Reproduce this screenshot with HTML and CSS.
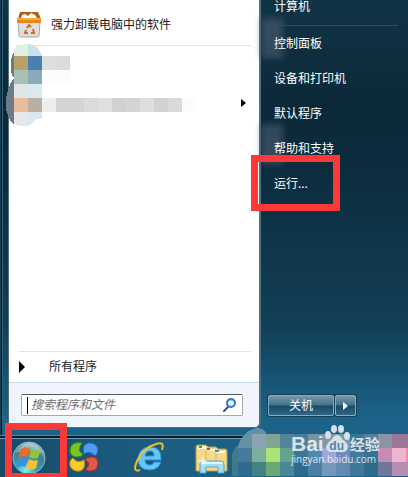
FILE: index.html
```html
<!DOCTYPE html>
<html lang="zh-CN">

<head>
    <meta charset="UTF-8">
    <meta name="viewport" content="width=device-width, initial-scale=1.0">
    <title>开始菜单</title>
    <link rel="stylesheet" href="styles.css">
</head>

<body>
    <div class="start-menu">
        <div class="programs">
            <a href="#" class="program">
                <svg class="program-icon" viewBox="0 0 26 27">
                    <path d="M2 8 L4 1 H22 L25 8Z" fill="#a8631a" />
                    <path d="M5 7 L6 4 L9 3 L12 5 L15 2 L19 4 L21 7Z" fill="#fffdf5" />
                    <path d="M2 11 H24 L23 25 Q23 26 21 26 H5 Q3 26 3 25Z" fill="#dedede" stroke="#a8a8a8" />
                    <path d="M1 7 H25 V11 Q25 12 24 12 H2 Q1 12 1 11Z" fill="#e58a14" />
                    <path d="M1 7 H25 V9 H1Z" fill="#f5ad3c" />
                    <path d="M11 17 L13 14 L15 16 M17 18 L18 22 H15 M12 22 H9 L10 19" fill="none" stroke="#d2691e" stroke-width="2" />
                </svg>
                <span>强力卸载电脑中的软件</span>
            </a>
            <div class="recent">
                <span class="arrow"></span>
            </div>
            <a href="#" class="all-programs">
                <span class="arrow"></span>
                <span>所有程序</span>
            </a>
            <form class="search">
                <div class="search-box">
                    <input type="text" placeholder="搜索程序和文件" aria-label="搜索程序和文件">
                    <svg class="search-icon" viewBox="0 0 14 14">
                        <path d="M1 13 L6 8" stroke="#2c4f9c" stroke-width="2" stroke-linecap="round" />
                        <circle cx="8" cy="5" r="4" fill="#e8f6ff" stroke="#2f74c8" stroke-width="2" />
                        <path d="M5 4 Q8 0 11 4" fill="none" stroke="#55b0e8" />
                    </svg>
                </div>
            </form>

            <!-- hidden recent items -->
            <svg class="mosaic" viewBox="0 0 190 84" shape-rendering="crispEdges">
                <path d="M8 8 Q5 12 5 18 V28 Q6 32 8 34 Q0 44 0 60 Q0 74 8 81Z" fill="#6b7c86" />
                <path d="M8 5 Q13 0 22 0 V12 H8Z" fill="#dff0e4" />
                <path d="M22 0 Q31 0 36 11 V12 H22Z" fill="#cae0ea" />
                <path d="M8 12h14v14H8z" fill="#b9a06a" />
                <path d="M22 12h14v14H22z" fill="#4a80b0" />
                <path d="M36 12h14v14H36z" fill="#dae1dd" />
                <path d="M50 12h14v14H50z" fill="#dadcdc" />
                <path d="M8 26h14v14H8z" fill="#a9c0b5" />
                <path d="M22 26h14v14H22z" fill="#8aa9b9" />
                <path d="M36 26h28v14H36z" fill="#fcfcfc" />
                <path d="M8 40h14v14H8z" fill="#e2e5e7" />
                <path d="M22 40h14v14H22z" fill="#dce8f0" />
                <path d="M8 54h14v14H8z" fill="#e8bc9c" />
                <path d="M22 54h14v14H22z" fill="#b8aea4" />
                <path d="M36 54h14v14H36z" fill="#f0eeec" />
                <path d="M50 54h28v14H50z" fill="#d3d4d6" />
                <path d="M78 54h14v14H78z" fill="#dcdbdc" />
                <path d="M92 54h14v14H92z" fill="#e2e0de" />
                <path d="M106 54h14v14h-14z" fill="#d1d1d2" />
                <path d="M120 54h14v14h-14z" fill="#d5d4d5" />
                <path d="M134 54h14v14h-14z" fill="#dedede" />
                <path d="M148 54h14v14h-14z" fill="#d4d1d2" />
                <path d="M162 54h14v14h-14z" fill="#d8d9d9" />
                <path d="M176 54h14v14h-14z" fill="#fbfdfd" />
                <path d="M8 68h14v14H14L8 80z" fill="#e6e7ea" />
                <path d="M22 68h14v7H30L26 80 22 82z" fill="#d8e8ee" />
            </svg>
        </div>

        <div class="places">
            <div class="glow glow-top"></div>
            <div class="glow glow-mid"></div>
            <nav>
                <a href="#">计算机</a>
                <hr>
                <a href="#">控制面板</a>
                <a href="#">设备和打印机</a>
                <a href="#">默认程序</a>
                <a href="#">帮助和支持</a>
                <a href="#" class="run">运行...</a>
            </nav>
            <div class="power">
                <button type="button" class="shutdown">关机</button>
                <button type="button" class="more" aria-label="更多选项"><span class="arrow"></span></button>
            </div>
        </div>
    </div>

    <div class="taskbar">
        <button type="button" class="start" aria-label="开始">
            <svg viewBox="0 0 36 36">
                <defs>
                    <radialGradient id="orb" cx="40%" cy="88%" r="85%">
                        <stop offset="0" stop-color="#7ff5f2" />
                        <stop offset=".4" stop-color="#2fa0b2" />
                        <stop offset=".75" stop-color="#407d8c" />
                        <stop offset="1" stop-color="#9ac0c4" />
                    </radialGradient>
                </defs>
                <circle cx="18" cy="18" r="16" fill="url(#orb)" stroke="#8eb9c4" />
                <path d="M4 13 Q18 -6 32 13 Q18 8 4 13Z" fill="#fff" opacity=".3" />
                <path d="M10 9 Q14 6 19 9 L17 17 Q12 15 7 18Z" fill="#ed6a2c" />
                <path d="M20 9 Q25 12 30 9 L27 18 Q23 20 18 17Z" fill="#8cc63e" />
                <path d="M7 20 Q12 16 17 19 L14 27 Q10 25 5 28Z" fill="#3f8fe0" />
                <path d="M18 19 Q22 22 27 20 L25 28 Q20 31 15 28Z" fill="#fcc22e" />
            </svg>
        </button>
        <button type="button" class="task" aria-label="浏览器">
            <svg viewBox="0 0 30 30">
                <path d="M13 1 Q2 -1 1 8 Q1 15 8 15 Q13 15 14 12 Q7 9 13 1Z" fill="#79c622" stroke="#3d8d1c" />
                <path d="M15 12 Q12 3 19 1 Q27 0 29 7 Q29 12 26 14 Q21 8 15 12Z" fill="#4d9df0" stroke="#2266bd" />
                <path d="M4 16 Q0 18 1 24 Q4 30 11 29 Q17 27 15 18 Q8 22 4 16Z" fill="#fcc928" stroke="#c98b10" />
                <path d="M22 15 Q29 14 29 22 Q28 30 20 29 Q17 29 17 27 Q23 21 16 18 Q18 15 22 15Z" fill="#e45648" stroke="#aa2c28" />
            </svg>
        </button>
        <button type="button" class="task" aria-label="Internet Explorer">
            <svg viewBox="0 0 30 30">
                <path d="M27 20 Q24 28 16 28 Q4 28 4 17 Q5 5 16 5 Q28 5 27 18 H11 Q11 23 16 23 Q19 23 20 20Z M11 14 H20 Q20 9 16 9 Q12 9 11 14Z" fill="#63c8f7" stroke="#2690d5" fill-rule="evenodd" />
                <path d="M6 28 Q-2 31 3 19 Q9 6 22 2 Q31 -1 28 8" fill="none" stroke="#f5bd22" stroke-width="2" />
            </svg>
        </button>
        <button type="button" class="task folder" aria-label="资源管理器">
            <svg viewBox="0 0 34 30">
                <path d="M2 3 Q2 1 4 1 H12 L14 3 H22 L24 5 H31 Q33 5 33 7 V27 H2Z" fill="#f3d988" stroke="#bd9a47" />
                <path d="M4 2 H12 V5 H21 V7 H31 V9 H22 V7 H13 V5 H4Z" fill="#fff8dc" />
                <path d="M5 2h3v2H5z" fill="#36a834" />
                <path d="M13 4h3v2h-3z" fill="#d9402c" />
                <path d="M21 6h4v2h-4z" fill="#2f8bdf" />
                <path d="M12 6V17M22 9V17" stroke="#d9b863" />
                <path d="M6 29 V20 Q6 17 9 17 H27 Q30 17 30 20 V29 H24 V23 H12 V29Z" fill="#a5dcf1" stroke="#5ba6cc" />
                <path d="M7 18 H29 V20 H7Z" fill="#dcf5fd" />
                <path d="M9 12 L10 16 L14 17 L10 19 L9 23 L8 19 L4 17 L8 16Z" fill="#fff" opacity=".7" />
            </svg>
        </button>

        <!-- hidden tray -->
        <svg class="tray-mosaic" viewBox="0 0 176 49" shape-rendering="crispEdges">
            <path d="M6 19 Q10 3 25 0 Q34 1 34 6 V20 H6Z" fill="#6590a5" />
            <path d="M20 6h14v14H20z" fill="#8ba4b2" />
            <path d="M34 6h14v14H34z" fill="#84a493" />
            <path d="M48 6h14v14H48z" fill="#54849a" />
            <path d="M62 6h14v14H62z" fill="#4b7f99" />
            <path d="M76 6h14v14H76z" fill="#79949f" />
            <path d="M90 6h28v14H90z" fill="#8098a8" />
            <path d="M118 6h14v14h-14z" fill="#3a7694" />
            <path d="M132 6h14v14h-14z" fill="#587f9a" />
            <path d="M146 6h14v14h-14z" fill="#8b93a8" />
            <path d="M160 6h16v14h-16z" fill="#9b7696" />
            <path d="M0 48V26L4 18H6V48z" fill="#43788b" />
            <path d="M6 20h14v14H6z" fill="#467b9b" />
            <path d="M20 20h14v14H20z" fill="#7caf9b" />
            <path d="M34 20h14v14H34z" fill="#abe476" />
            <path d="M48 20h14v14H48z" fill="#66a28c" />
            <path d="M62 20h14v14H62z" fill="#3a7799" />
            <path d="M76 20h14v14H76z" fill="#5288ab" />
            <path d="M90 20h14v14H90z" fill="#9ba9da" />
            <path d="M104 20h14v14h-14z" fill="#7189be" />
            <path d="M118 20h14v14h-14z" fill="#427b9d" />
            <path d="M132 20h14v14h-14z" fill="#347391" />
            <path d="M146 20h14v14h-14z" fill="#c58bb1" />
            <path d="M160 20h14v14h-14z" fill="#efb4d1" />
            <path d="M174 20h2v14h-2z" fill="#f784a5" />
            <path d="M6 34h14v14H6z" fill="#2d6b90" />
            <path d="M20 34h14v14H20z" fill="#438386" />
            <path d="M34 34h14v14H34z" fill="#6ba876" />
            <path d="M48 34h14v14H48z" fill="#48889a" />
            <path d="M62 34h14v14H62z" fill="#2d6c91" />
            <path d="M76 34h14v14H76z" fill="#4a80a5" />
            <path d="M90 34h14v14H90z" fill="#7697bd" />
            <path d="M104 34h14v14h-14z" fill="#628bb1" />
            <path d="M118 34h14v14h-14z" fill="#3f7898" />
            <path d="M132 34h14v14h-14z" fill="#2e6b8c" />
            <path d="M146 34h14v14h-14z" fill="#70779b" />
            <path d="M160 34h16v14h-16z" fill="#b98db2" />
        </svg>

        <div class="watermark">
            <div class="brand">
                <span class="bai">Bai</span>
                <span class="paw">
                    <svg viewBox="0 0 26 29">
                        <ellipse cx="4" cy="11" rx="3" ry="4" />
                        <ellipse cx="10" cy="5" rx="3" ry="4" />
                        <ellipse cx="17" cy="5" rx="3" ry="4" />
                        <ellipse cx="23" cy="12" rx="3" ry="4" />
                        <path d="M13 11 Q16 11 18 15 Q24 19 24 23 Q23 29 17 28 H8 Q2 28 2 23 Q3 19 8 15 Q10 11 13 11Z" />
                    </svg>
                    <span class="du">du</span>
                </span>
                <span class="exp">经验</span>
            </div>
            <div class="site">jingyan.baidu.com</div>
        </div>
    </div>
</body>

</html>
```

FILE: styles.css
```css
*,
*::after {
    box-sizing: border-box;
}

body {
    margin: 0;
    height: 100vh;
    overflow: hidden;
    display: flex;
    flex-direction: column;
    font-family: "Noto Sans", "Noto Sans CJK SC", sans-serif;
    font-size: 12px;
    line-height: 20px;
    background-color: #1d6286;
}

a {
    color: inherit;
    text-decoration: none;
}

button {
    margin: 0;
    padding: 0;
    border: none;
    background: none;
    font: inherit;
    color: inherit;
}

svg {
    display: block;
}

.start-menu {
    flex: 1;
    min-height: 0;
    display: flex;
    padding: 0 0 8px 8px;
    background: linear-gradient(#113444, #0b2838 25%, #0d2e40 42%, #123f57 75%, #1b6389 96%);
    box-shadow: inset 1px 0 #12415a, inset 2px 0 #071b27, inset 3px 0 #3c6073;
}

/* left side */
.programs {
    position: relative;
    width: 253px;
    display: flex;
    flex-direction: column;
    background-color: #fff;
    color: #1c1c1c;
    border: 1px solid #4f7080;
    border-top: none;
    border-right-width: 2px;
    border-radius: 0 0 6px 6px;
}

.program {
    display: flex;
    align-items: center;
    gap: 9px;
    height: 46px;
    margin: 0 8px 0 7px;
    padding-top: 4px;
    border-bottom: 1px solid #d6e5f2;
}

.program-icon {
    width: 26px;
    height: 27px;
}

.recent {
    flex: 1;
    padding: 53px 13px 0 0;
}

.arrow {
    display: block;
    width: 0;
    height: 0;
    border-left: 5px solid #000;
    border-top: 5px solid transparent;
    border-bottom: 5px solid transparent;
}

.recent .arrow {
    margin-left: auto;
    border-width: 4px 0 4px 5px;
}

.all-programs {
    display: flex;
    align-items: center;
    gap: 24px;
    height: 31px;
    margin: 0 8px 0 10px;
    border-top: 1px solid #d6e5f2;
}

.all-programs .arrow {
    border-width: 6px 0 6px 6px;
}

.search {
    margin: 0;
    padding: 11px 16px 11px 12px;
    background-color: #f0f4fc;
    border-top: 1px solid #c6dce8;
    border-radius: 0 0 5px 5px;
}

.search-box {
    display: flex;
    align-items: center;
    height: 22px;
    padding: 0 5px;
    background-color: #fff;
    border: 1px solid #a5a9ad;
    border-top-color: #54585c;
    border-radius: 2px;
}

.search-box input {
    flex: 1;
    min-width: 0;
    height: 17px;
    padding: 0 0 0 3px;
    border: none;
    border-left: 1px solid #000;
    outline: none;
    background: none;
    font: inherit;
    font-style: italic;
}

.search-box input::placeholder {
    color: #6d6d6d;
}

.search-icon {
    width: 14px;
    height: 14px;
}

.mosaic {
    position: absolute;
    top: 44px;
    left: -3px;
    width: 190px;
    height: 84px;
}

/* right side */
.places {
    position: relative;
    flex: 1;
    display: flex;
    flex-direction: column;
    justify-content: space-between;
    color: #fff;
}

.places nav {
    position: relative;
    display: flex;
    flex-direction: column;
    margin-left: 13px;
    margin-right: 10px;
}

.places nav a {
    height: 35px;
    line-height: 35px;
}

.places nav a:first-child {
    height: 25px;
    line-height: 14px;
}

.places hr {
    width: 100%;
    height: 1px;
    margin: 0;
    border: none;
    background-color: #344c5a;
}

.run {
    position: relative;
}

.run::after {
    content: "";
    position: absolute;
    top: -11px;
    left: -23px;
    width: 89px;
    height: 56px;
    border: 7px solid #fd3838;
}

.glow {
    position: absolute;
    left: 0;
    width: 22px;
    height: 40px;
    background-color: #46566a;
    opacity: .7;
    filter: blur(3px);
}

.glow-top {
    top: 18px;
}

.glow-mid {
    top: 124px;
}

.power {
    display: flex;
    margin: 0 0 12px 7px;
}

.power button {
    display: flex;
    align-items: center;
    justify-content: center;
    height: 21px;
    border: 1px solid #8cabba;
    border-radius: 2px;
    background: linear-gradient(#7797a7, #40728b 48%, #1a4b66 52%, #2d6787);
    box-shadow: 0 0 0 1px #163e54;
}

.power .shutdown {
    width: 66px;
}

.power .more {
    width: 21px;
    margin-left: 1px;
}

.power .arrow {
    border-width: 4px 0 4px 5px;
    border-left-color: #fff;
}

/* taskbar */
.taskbar {
    position: relative;
    display: flex;
    height: 41px;
    padding: 2px 0 0 11px;
    border-top: 2px solid #081c28;
    background: linear-gradient(90deg, #184a68, #1b587b 25%, #1c6286 60%);
    box-shadow: inset 0 1px #6c9db3, 0 -1px #4889a8;
}

.start {
    position: relative;
    width: 36px;
    height: 36px;
}

.start::after {
    content: "";
    position: absolute;
    top: -17px;
    left: -6px;
    width: 62px;
    height: 57px;
    border: 7px solid #fd3838;
}

.start svg {
    width: 36px;
    height: 36px;
}

.task {
    width: 30px;
    height: 30px;
    margin: 2px 13px 0 22px;
}

.folder {
    width: 34px;
    margin: 4px 0 0 17px;
}

.tray-mosaic {
    position: absolute;
    right: 0;
    bottom: 0;
    width: 176px;
    height: 49px;
}

.watermark {
    position: absolute;
    right: 24px;
    bottom: 12px;
    width: 93px;
    color: rgba(255, 255, 255, .8);
}

.brand {
    display: flex;
    align-items: flex-end;
    height: 28px;
}

.bai {
    font: bold 21px/18px "Liberation Sans", sans-serif;
}

.paw {
    position: relative;
}

.paw svg {
    width: 26px;
    height: 29px;
    fill: #d5e0ea;
}

.du {
    position: absolute;
    right: 0;
    bottom: 0;
    left: 0;
    color: #5a84a5;
    font: bold 12px/14px "Liberation Sans", sans-serif;
    text-align: center;
}

.exp {
    font-size: 15px;
    font-weight: bold;
    line-height: 18px;
}

.site {
    font-family: "Open Sans", sans-serif;
    font-size: 10px;
    line-height: 12px;
}
```
